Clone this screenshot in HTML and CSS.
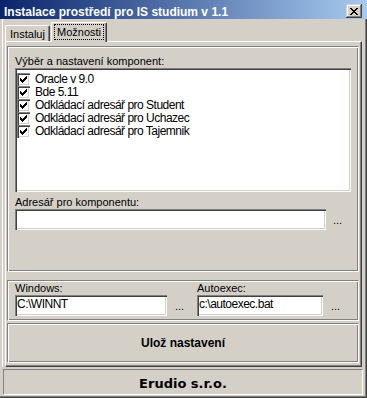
FILE: index.html
```html
<!DOCTYPE html>
<html>
<head>
    <meta charset="utf-8">
    <title>Instalace prostředí pro IS studium v 1.1</title>
    <link rel="stylesheet" href="styles.css">
</head>
<body>
    <div class="window">
        <div class="titlebar">
            <span class="caption">Instalace prostředí pro IS studium v 1.1</span>
            <span class="close-btn">
                <svg width="8" height="7" viewBox="0 0 8 7"><path d="M0 0h2v1h-2z M6 0h2v1h-2z M1 1h2v1h-2z M5 1h2v1h-2z M2 2h4v1h-4z M3 3h2v1h-2z M2 4h4v1h-4z M1 5h2v1h-2z M5 5h2v1h-2z M0 6h2v1h-2z M6 6h2v1h-2z" fill="#000"/></svg>
            </span>
        </div>

        <div class="frame">
            <div class="client">
                <!-- tab strip -->
                <div class="tabs">
                    <div class="tab">Instaluj</div>
                    <div class="tab active"><span class="focus">Možnosti</span></div>
                </div>

                <div class="page">
                    <div class="group components">
                        <div class="label">Výběr a nastavení komponent:</div>
                        <div class="listbox">
                            <div class="item"><span class="check"><svg width="7" height="7" viewBox="0 0 7 7"><path d="M0 2h1v3h-1z M1 3h1v3h-1z M2 4h1v3h-1z M3 3h1v3h-1z M4 2h1v3h-1z M5 1h1v3h-1z M6 0h1v3h-1z" fill="#000"/></svg></span>Oracle v 9.0</div>
                            <div class="item"><span class="check"><svg width="7" height="7" viewBox="0 0 7 7"><path d="M0 2h1v3h-1z M1 3h1v3h-1z M2 4h1v3h-1z M3 3h1v3h-1z M4 2h1v3h-1z M5 1h1v3h-1z M6 0h1v3h-1z" fill="#000"/></svg></span>Bde 5.11</div>
                            <div class="item"><span class="check"><svg width="7" height="7" viewBox="0 0 7 7"><path d="M0 2h1v3h-1z M1 3h1v3h-1z M2 4h1v3h-1z M3 3h1v3h-1z M4 2h1v3h-1z M5 1h1v3h-1z M6 0h1v3h-1z" fill="#000"/></svg></span>Odkládací adresář pro Student</div>
                            <div class="item"><span class="check"><svg width="7" height="7" viewBox="0 0 7 7"><path d="M0 2h1v3h-1z M1 3h1v3h-1z M2 4h1v3h-1z M3 3h1v3h-1z M4 2h1v3h-1z M5 1h1v3h-1z M6 0h1v3h-1z" fill="#000"/></svg></span>Odkládací adresář pro Uchazec</div>
                            <div class="item"><span class="check"><svg width="7" height="7" viewBox="0 0 7 7"><path d="M0 2h1v3h-1z M1 3h1v3h-1z M2 4h1v3h-1z M3 3h1v3h-1z M4 2h1v3h-1z M5 1h1v3h-1z M6 0h1v3h-1z" fill="#000"/></svg></span>Odkládací adresář pro Tajemnik</div>
                        </div>
                        <div class="label label-gap">Adresář pro komponentu:</div>
                        <div class="edit-row">
                            <div class="edit edit-wide"></div>
                            <span class="browse">...</span>
                        </div>
                    </div>

                    <div class="group paths">
                        <div class="field">
                            <div class="label">Windows:</div>
                            <div class="edit-row">
                                <div class="edit edit-win">C:\WINNT</div>
                                <span class="browse">...</span>
                            </div>
                        </div>
                        <div class="field">
                            <div class="label">Autoexec:</div>
                            <div class="edit-row">
                                <div class="edit edit-auto">c:\autoexec.bat</div>
                                <span class="browse">...</span>
                            </div>
                        </div>
                    </div>

                    <div class="group save">Ulož nastavení</div>
                </div>
            </div>

            <div class="status">Erudio s.r.o.</div>
        </div>
    </div>
</body>
</html>
```

FILE: styles.css
```css
:root {
    --face: #d4d0c8;
    --shadow: #808080;
    --dark: #404040;
    --light: #ffffff;
}

* {
    box-sizing: border-box;
}

body {
    margin: 0;
    background: var(--face);
    font-family: "Liberation Sans", Arial, sans-serif;
    font-size: 11px;
    color: #000;
}

.window {
    width: 367px;
    height: 398px;
    display: flex;
    flex-direction: column;
    background: var(--face);
}

/* caption */
.titlebar {
    height: 19px;
    display: flex;
    align-items: flex-start;
    padding: 4px 5px 0 4px;
    background: linear-gradient(to right, #0a246a, #a6caf0);
    color: #fff;
    font-weight: bold;
    font-size: 12px;
    line-height: 16px;
    white-space: nowrap;
}

.caption {
    flex: 1;
}

.close-btn {
    width: 16px;
    height: 14px;
    display: flex;
    padding: 4px 0 0 4px;
    background: var(--face);
    box-shadow: inset -1px -1px var(--dark), inset 1px 1px var(--face), inset -2px -2px var(--shadow), inset 2px 2px var(--light);
}

.close-btn svg {
    display: block;
}

/* window body */
.frame {
    flex: 1;
    display: flex;
    flex-direction: column;
    padding: 0 2px 2px 2px;
    box-shadow: inset -1px -1px var(--dark), inset -2px -2px var(--shadow);
}

.client {
    height: 348px;
    display: flex;
    flex-direction: column;
    border-left: 1px solid var(--light);
    padding: 0 3px 0 2px;
}

.tabs {
    height: 22px;
    display: flex;
    align-items: flex-end;
}

.tab {
    height: 16px;
    width: 45px;
    padding-top: 2px;
    text-align: center;
    line-height: 13px;
    border-top: 1px solid var(--light);
    border-left: 1px solid var(--light);
    border-right: 1px solid var(--dark);
    box-shadow: inset -1px 0 var(--shadow);
    border-radius: 2px 2px 0 0;
}

.tab.active {
    position: relative;
    z-index: 1;
    width: 56px;
    height: 20px;
    margin-left: 1px;
    margin-bottom: -1px;
    padding-top: 1px;
    background: var(--face);
}

.focus {
    display: inline-block;
    line-height: 14px;
    padding: 0 2px;
    border: 1px dotted #000;
}

.page {
    flex: 1;
    display: flex;
    flex-direction: column;
    padding: 4px 2px 3px 1px;
    border: 1px solid;
    border-color: var(--light) var(--dark) var(--dark) var(--light);
    box-shadow: inset -1px -1px var(--shadow);
}

/* etched panels */
.group {
    width: 352px;
    border: 1px solid;
    border-color: var(--shadow) var(--light) var(--light) var(--shadow);
    box-shadow: inset 1px 1px var(--light), inset -1px -1px var(--shadow);
}

.components {
    height: 226px;
    padding: 8px 7px 0 7px;
    margin-bottom: 8px;
}

.label {
    line-height: 13px;
    white-space: nowrap;
}

.label-gap {
    margin-top: 4px;
}

.listbox {
    width: 336px;
    height: 124px;
    padding: 5px 0 0 2px;
    background: #fff;
    box-shadow: inset 1px 1px var(--shadow), inset 2px 2px var(--dark), inset -1px -1px var(--light), inset -2px -2px var(--face);
}

.item {
    height: 13px;
    display: flex;
    align-items: center;
    gap: 5px;
    font-size: 12px;
    letter-spacing: -0.5px;
    line-height: 13px;
    white-space: nowrap;
}

.check {
    flex: none;
    width: 13px;
    height: 13px;
    display: flex;
    align-items: center;
    justify-content: center;
    background: #fff;
    box-shadow: inset 1px 1px var(--shadow), inset 2px 2px var(--dark), inset -1px -1px var(--light), inset -2px -2px var(--face);
}

.edit-row {
    display: flex;
    align-items: center;
}

.edit {
    height: 21px;
    padding: 3px 0 0 2px;
    background: #fff;
    font-size: 12px;
    letter-spacing: -0.5px;
    line-height: 13px;
    white-space: nowrap;
    box-shadow: inset 1px 1px var(--shadow), inset 2px 2px var(--dark), inset -1px -1px var(--light), inset -2px -2px var(--face);
}

.edit-wide {
    width: 311px;
}

.edit-win {
    width: 152px;
}

.edit-auto {
    width: 126px;
}

.browse {
    width: 10px;
    margin-left: 8px;
    line-height: 13px;
    padding-top: 2px;
}

.components .browse {
    margin-left: 7px;
}

.paths {
    height: 41px;
    display: flex;
    gap: 12px;
    padding: 1px 0 0 7px;
    margin-bottom: 2px;
}

.field {
    display: flex;
    flex-direction: column;
}

.save {
    height: 40px;
    display: flex;
    align-items: center;
    justify-content: center;
    font-weight: bold;
    font-size: 12px;
}

.status {
    height: 26px;
    margin: 2px 2px 0 1px;
    padding-top: 2px;
    display: flex;
    align-items: center;
    justify-content: center;
    border: 1px solid;
    border-color: var(--shadow) var(--light) var(--light) var(--shadow);
    font-family: "DejaVu Sans", Verdana, sans-serif;
    font-weight: bold;
    font-size: 13px;
}
```
